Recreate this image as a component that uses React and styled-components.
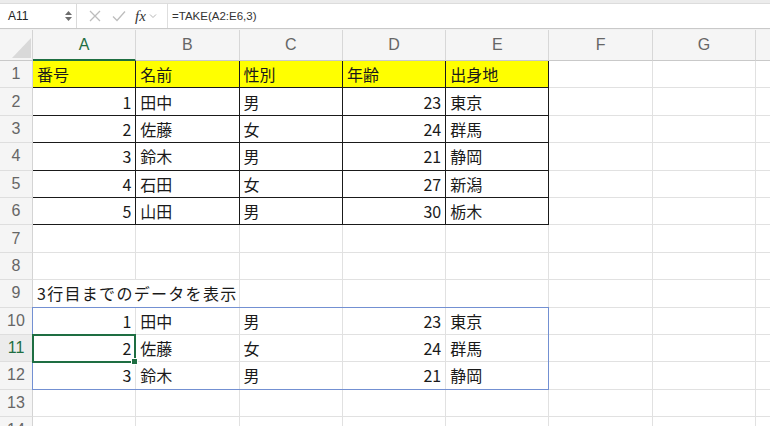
import styled, { createGlobalStyle } from "styled-components";

const GlobalStyle = createGlobalStyle`
  html, body {
    margin: 0;
    padding: 0;
    background: #fff;
    overflow: hidden;
  }
  body {
    font-family: "Noto Sans CJK JP", sans-serif;
  }
`;

const Page = styled.div`
  width: 770px;
  height: 426px;
  overflow: hidden;
  background: #fff;
`;

const TopBand = styled.div`
  height: 3px;
  background: #ececec;
  border-bottom: 1px solid #dcdcdc;
`;

const FormulaBar = styled.div`
  display: flex;
  align-items: stretch;
  height: 24px;
  border-bottom: 1px solid #c9c9c9;
  background: #fff;
`;

const NameBox = styled.div`
  display: flex;
  align-items: center;
  justify-content: space-between;
  width: 77px;
  box-sizing: border-box;
  padding: 0 4px 0 8px;
  border-right: 1px solid #dadada;
  font-family: "Liberation Sans", Arial, sans-serif;
  font-size: 12px;
  color: #222;
`;

const Spinner = styled.div`
  display: flex;
  flex-direction: column;
  gap: 2px;
`;

const Actions = styled.div`
  display: flex;
  align-items: center;
  width: 91px;
  box-sizing: border-box;
  padding-left: 12px;
  gap: 11px;
  border-right: 1px solid #dedede;
`;

const Fx = styled.span`
  font-family: "Liberation Serif", "Times New Roman", serif;
  font-style: italic;
  font-size: 15px;
  color: #333;
  display: flex;
  align-items: center;
  gap: 3px;
  margin-left: -2px;
`;

const FormulaText = styled.div`
  flex: 1;
  display: flex;
  align-items: center;
  padding-left: 4px;
  font-family: "Liberation Sans", Arial, sans-serif;
  font-size: 11.5px;
  color: #333;
`;

const Sheet = styled.div`
  display: grid;
  grid-template-columns: 33px repeat(8, 103.3px);
  grid-template-rows: 31px repeat(14, 27.4px);
  border-top: 1px solid #f1f1f1;
`;

const Corner = styled.div`
  grid-row: 1;
  grid-column: 1;
  background: #f5f5f5;
  border-right: 1px solid #d4d4d4;
  border-bottom: 1px solid #c9c9c9;
  display: flex;
  align-items: flex-end;
  justify-content: flex-end;
  box-sizing: border-box;
  padding: 0 1px 2px 0;
`;

const ColHead = styled.div`
  grid-row: 1;
  grid-column: ${(p) => p.$col};
  box-sizing: border-box;
  display: flex;
  align-items: center;
  justify-content: center;
  background: #f5f5f5;
  border-right: 1px solid #d7d7d7;
  border-bottom: ${(p) => (p.$active ? "2px solid #1e6e42" : "1px solid #c9c9c9")};
  font-family: "Liberation Sans", Arial, sans-serif;
  font-size: 16px;
  color: ${(p) => (p.$active ? "#1e6e42" : "#666")};
  padding-top: ${(p) => (p.$active ? "1px" : "0")};
`;

const RowHead = styled.div`
  grid-row: ${(p) => p.$row};
  grid-column: 1;
  box-sizing: border-box;
  display: flex;
  align-items: center;
  justify-content: center;
  background: ${(p) => (p.$active ? "#ececec" : "#f5f5f5")};
  border-right: 1px solid #d4d4d4;
  border-bottom: 1px solid #dedede;
  font-family: "Liberation Sans", Arial, sans-serif;
  font-size: 16px;
  color: ${(p) => (p.$active ? "#1e6e42" : "#666")};
`;

const Cell = styled.div`
  grid-row: ${(p) => p.$row};
  grid-column: ${(p) => `${p.$col} / span ${p.$span || 1}`};
  box-sizing: border-box;
  display: flex;
  align-items: center;
  justify-content: ${(p) => (p.$num ? "flex-end" : "flex-start")};
  padding: 0 4px;
  white-space: nowrap;
  overflow: visible;
  background: ${(p) => (p.$yellow ? "#ffff00" : "#fff")};
  border-right: 1px solid ${(p) => (p.$boxed ? "#1a1a1a" : "#e1e1e1")};
  border-bottom: 1px solid ${(p) => (p.$boxed ? "#1a1a1a" : "#e1e1e1")};
  font-size: 16px;
  letter-spacing: ${(p) => (p.$wide ? "1.3px" : "0")};
  color: #1a1a1a;
`;

const SpillRange = styled.div`
  grid-row: 11 / 14;
  grid-column: 2 / 7;
  margin: -1px 0 0 -1px;
  border: 1px solid #7390d2;
  pointer-events: none;
  z-index: 1;
`;

const ActiveCell = styled.div`
  grid-row: 12;
  grid-column: 2;
  margin: -1px 0 -1px -1px;
  border: 2px solid #1e6e42;
  position: relative;
  pointer-events: none;
  z-index: 2;
`;

const Handle = styled.span`
  position: absolute;
  right: -4px;
  bottom: -4px;
  width: 5px;
  height: 5px;
  background: #1e6e42;
  border: 1px solid #fff;
`;

const cols = ["A", "B", "C", "D", "E", "F", "G", "H"];

const table = [
  ["番号", "名前", "性別", "年齢", "出身地"],
  [1, "田中", "男", 23, "東京"],
  [2, "佐藤", "女", 24, "群馬"],
  [3, "鈴木", "男", 21, "静岡"],
  [4, "石田", "女", 27, "新潟"],
  [5, "山田", "男", 30, "栃木"],
];

const rows = [];
for (let r = 1; r <= 14; r++) {
  let values = [];
  if (r <= 6) values = table[r - 1];
  if (r >= 10 && r <= 12) values = table[r - 9];
  rows.push({ n: r, values });
}

const Chevron = () => (
  <svg width="8" height="6" viewBox="0 0 8 6">
    <path d="M1 1.5 L4 4.5 L7 1.5" fill="none" stroke="#b5b5b5" strokeWidth="1" />
  </svg>
);

const RowGroup = ({ row }) => {
  const gridRow = row.n + 1;
  const boxed = row.n <= 6;
  const cells = [];
  if (row.n === 9) {
    cells.push(
      <Cell key="a" $row={gridRow} $col={2} $span={2} $wide>
        3行目までのデータを表示
      </Cell>
    );
    for (let i = 2; i < 8; i++) cells.push(<Cell key={i} $row={gridRow} $col={i + 2} />);
  } else {
    for (let i = 0; i < 8; i++) {
      const v = row.values[i];
      const inTable = i < 5;
      cells.push(
        <Cell
          key={i}
          $row={gridRow}
          $col={i + 2}
          $num={typeof v === "number"}
          $yellow={row.n === 1 && inTable}
          $boxed={boxed && inTable}
        >
          {v}
        </Cell>
      );
    }
  }
  return (
    <>
      <RowHead $row={gridRow} $active={row.n === 11}>
        {row.n}
      </RowHead>
      {cells}
    </>
  );
};

const App = () => {
  return (
    <Page>
      <GlobalStyle />
      <TopBand />
      <FormulaBar>
        <NameBox>
          A11
          <Spinner>
            <svg width="7" height="4" viewBox="0 0 7 4">
              <path d="M3.5 0 L7 4 L0 4 Z" fill="#6d6d6d" />
            </svg>
            <svg width="7" height="4" viewBox="0 0 7 4">
              <path d="M0 0 L7 0 L3.5 4 Z" fill="#6d6d6d" />
            </svg>
          </Spinner>
        </NameBox>
        <Actions>
          <svg width="12" height="12" viewBox="0 0 12 12">
            <path d="M1 1 L11 11 M11 1 L1 11" stroke="#bdbdbd" strokeWidth="1.3" />
          </svg>
          <svg width="14" height="12" viewBox="0 0 14 12">
            <path d="M1 6.5 L5 10.5 L13 1.5" fill="none" stroke="#bdbdbd" strokeWidth="1.3" />
          </svg>
          <Fx>
            fx
            <Chevron />
          </Fx>
        </Actions>
        <FormulaText>=TAKE(A2:E6,3)</FormulaText>
      </FormulaBar>
      <Sheet>
        <Corner>
          <svg width="19" height="20" viewBox="0 0 19 20">
            <polygon points="19,0 19,20 0,20" fill="#d9d9d9" />
          </svg>
        </Corner>
        {cols.map((c, i) => (
          <ColHead key={c} $col={i + 2} $active={c === "A"}>
            {c}
          </ColHead>
        ))}
        {rows.map((row) => (
          <RowGroup key={row.n} row={row} />
        ))}
        <SpillRange />
        <ActiveCell>
          <Handle />
        </ActiveCell>
      </Sheet>
    </Page>
  );
};

export default App;
